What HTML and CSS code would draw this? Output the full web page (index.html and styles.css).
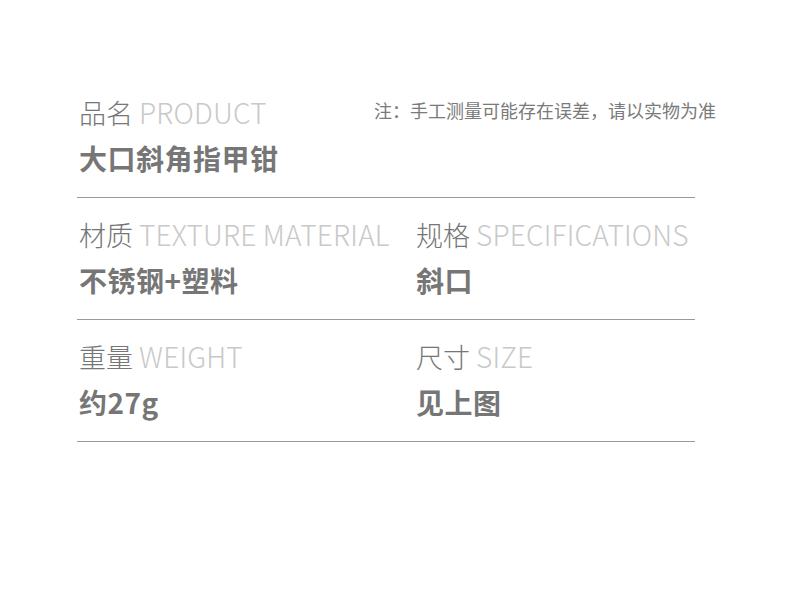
FILE: index.html
```
<!DOCTYPE html>
<html lang="zh">
<head>
<meta charset="utf-8">
<link rel="stylesheet" href="styles.css">
</head>
<body>
<div class="sheet">
  <div class="row">
    <div class="cell">
      <div class="label"><span class="zh">品名</span> <span class="en">PRODUCT</span></div>
      <div class="value">大口斜角指甲钳</div>
    </div>
    <div class="note">注：手工测量可能存在误差，请以实物为准</div>
  </div>
  <div class="row">
    <div class="cell">
      <div class="label"><span class="zh">材质</span> <span class="en">TEXTURE MATERIAL</span></div>
      <div class="value">不锈钢+塑料</div>
    </div>
    <div class="cell">
      <div class="label"><span class="zh">规格</span> <span class="en">SPECIFICATIONS</span></div>
      <div class="value">斜口</div>
    </div>
  </div>
  <div class="row">
    <div class="cell">
      <div class="label"><span class="zh">重量</span> <span class="en">WEIGHT</span></div>
      <div class="value">约27g</div>
    </div>
    <div class="cell">
      <div class="label"><span class="zh">尺寸</span> <span class="en">SIZE</span></div>
      <div class="value">见上图</div>
    </div>
  </div>
</div>
</body>
</html>
```
FILE: styles.css
```
html, body {
  margin: 0;
  padding: 0;
  background: #ffffff;
}
body {
  font-family: "Noto Sans CJK SC", "Noto Sans", sans-serif;
  width: 790px;
  height: 616px;
  overflow: hidden;
}
.sheet {
  margin-left: 77px;
  width: 618px;
  padding-top: 96px;
}
.row {
  display: flex;
  border-bottom: 1px solid #9a9a9a;
  padding: 20px 0 21px 2px;
  position: relative;
}
.row:first-child {
  padding-top: 0;
}
.cell {
  flex: 0 0 auto;
  display: flex;
  flex-direction: column;
  gap: 12px;
}
.cell:first-child {
  width: 337px;
}
.label {
  height: 32px;
  font-size: 27px;
  line-height: 32px;
  font-weight: 300;
  white-space: nowrap;
}
.label .zh {
  color: #767676;
}
.label .en {
  color: #c9c9c9;
  font-size: 28px;
  line-height: 32px;
  letter-spacing: 0.2px;
}
.value {
  height: 36px;
  font-size: 28px;
  line-height: 36px;
  font-weight: 700;
  letter-spacing: 0.5px;
  color: #767676;
  white-space: nowrap;
}
.note {
  position: absolute;
  right: -21px;
  top: 0;
  font-size: 18px;
  line-height: 28px;
  color: #7a7a7a;
  white-space: nowrap;
}
```
